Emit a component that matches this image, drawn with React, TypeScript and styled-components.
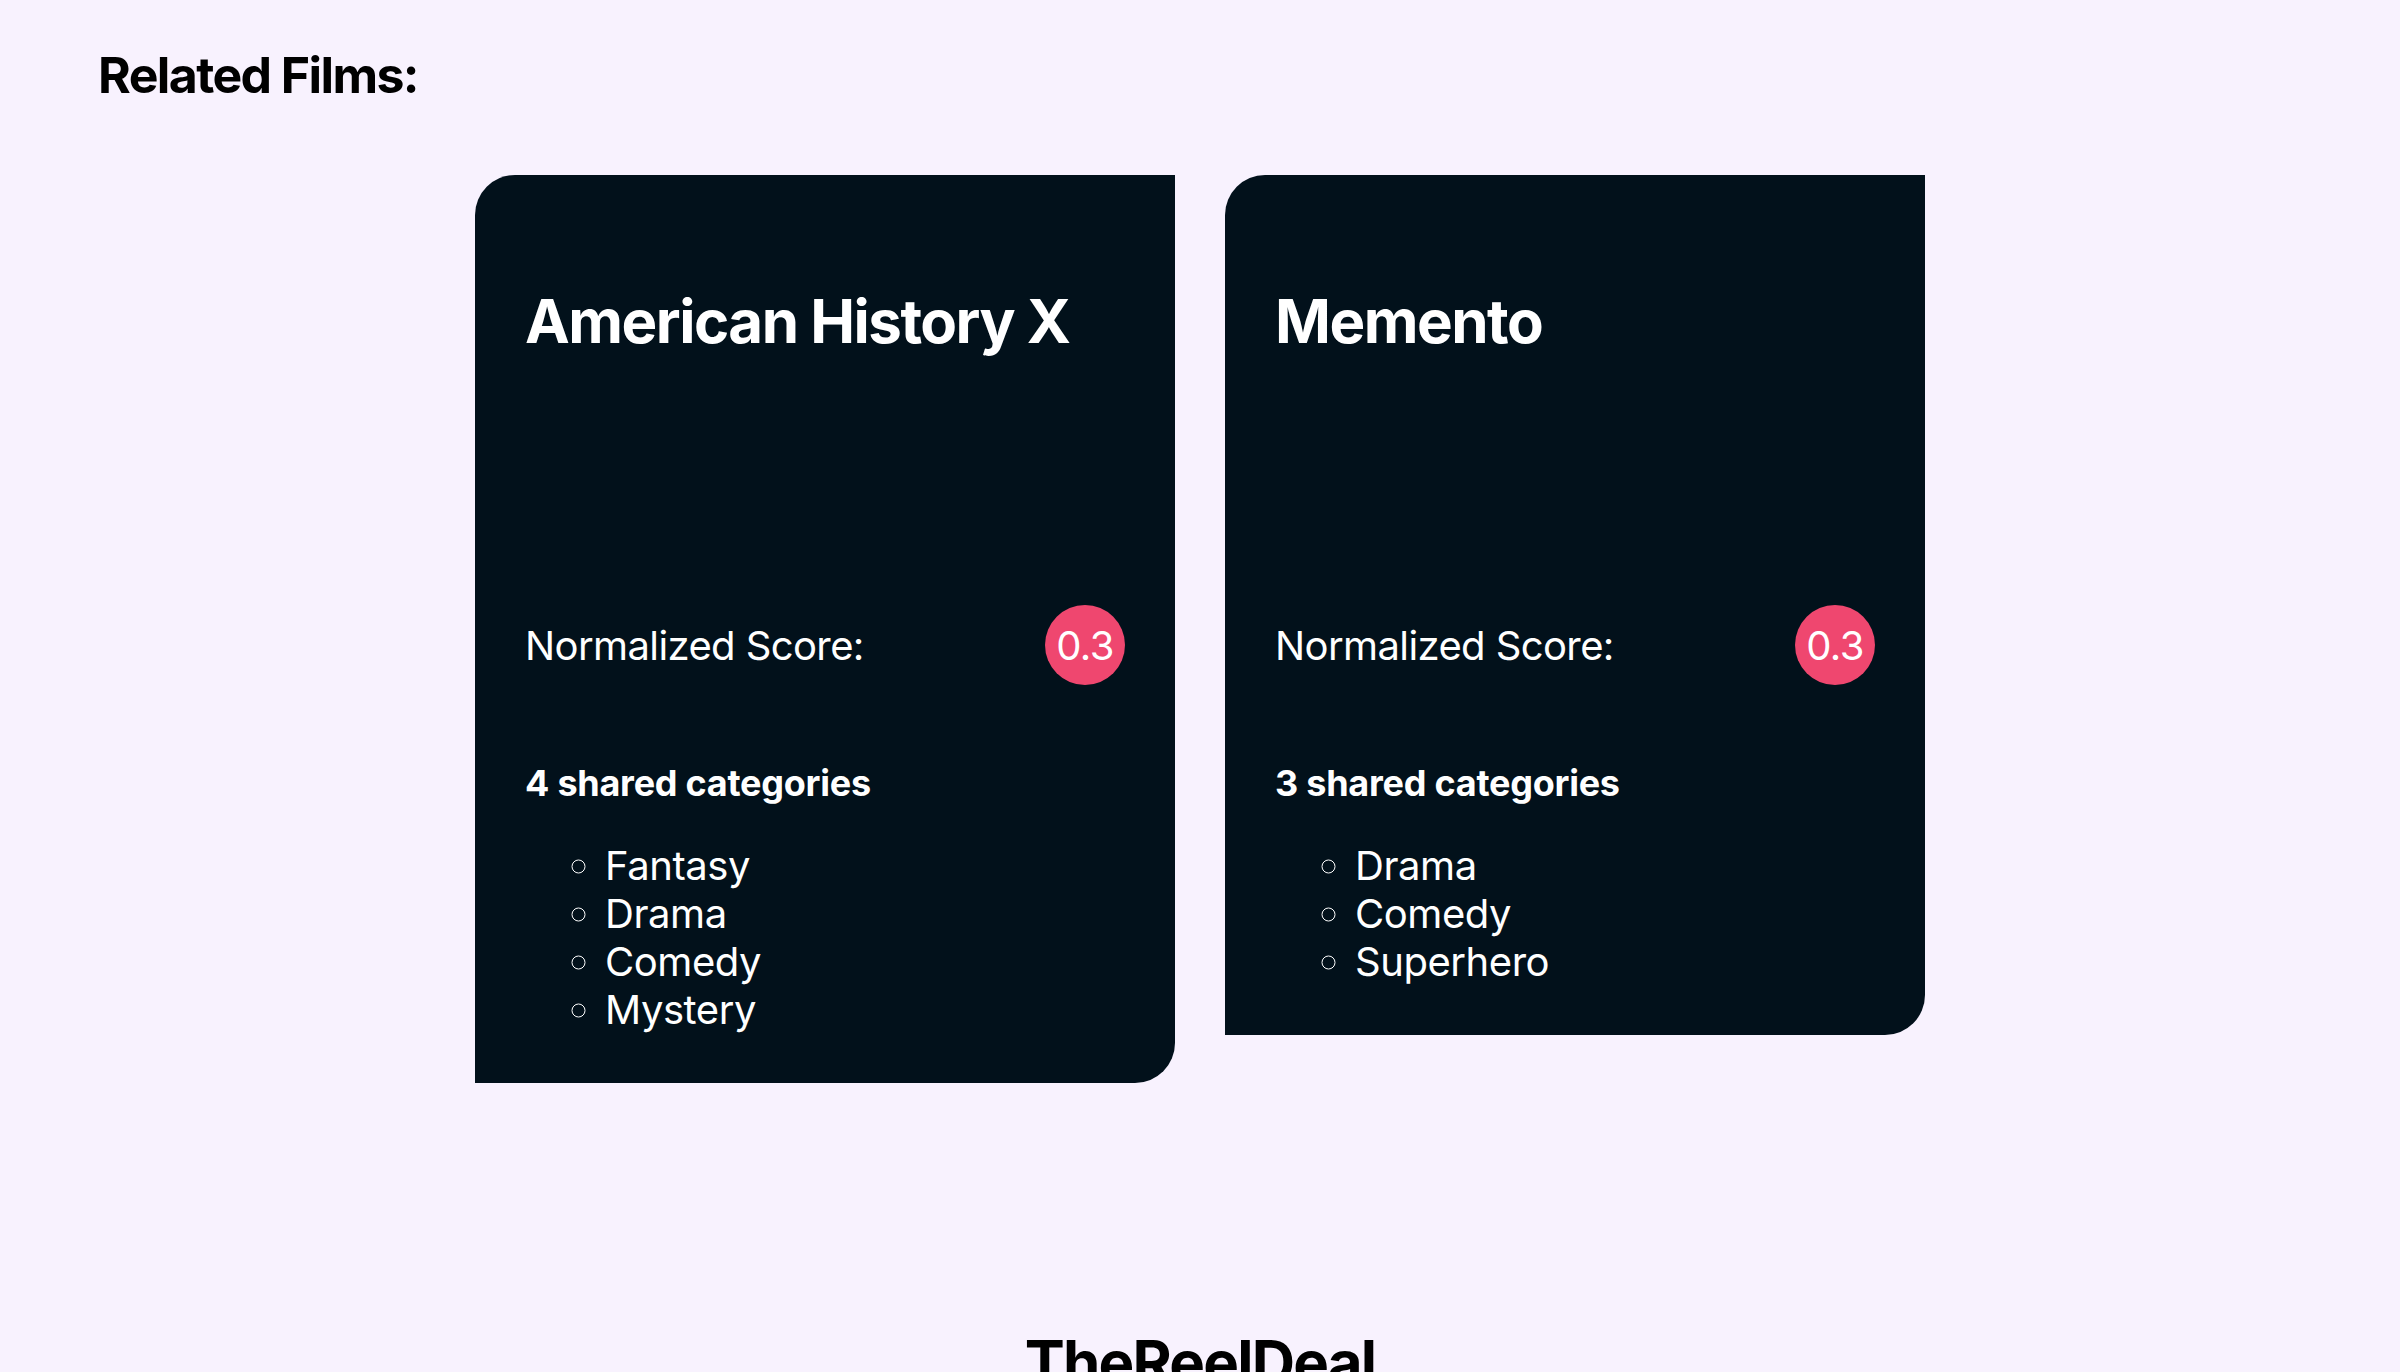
import React from "react";
import styled, { createGlobalStyle } from "styled-components";

const GlobalStyle = createGlobalStyle`
    html, body {
        margin: 0;
        padding: 0;
        background-color: #f8f2fe;
        font-family: Inter, "Noto Sans", sans-serif;
        color: #000;
    }
`;

const Page = styled.div`
    & {
        min-height: 1372px;
        padding-top: 45px;
        box-sizing: border-box;
    }
`;

const Heading = styled.h1`
    & {
        margin: 0 0 0 98px;
        font-size: 50px;
        font-weight: 700;
        line-height: normal;
        letter-spacing: -1.6px;
    }
`;

const CardRow = styled.div`
    & {
        display: flex;
        justify-content: center;
        align-items: flex-start;
        gap: 50px;
        margin-top: 70px;
    }
`;

const Card = styled.article`
    & {
        display: flex;
        flex-direction: column;
        width: 700px;
        padding: 50px 50px 49px;
        box-sizing: border-box;
        background-color: #02111b;
        border-radius: 40px 0 40px 0;
        color: #fff;
    }
`;

const Title = styled.h2`
    & {
        margin: 60px 0 0;
        min-height: 260px;
        font-size: 60px;
        font-weight: 700;
        line-height: normal;
        letter-spacing: -1.5px;
    }
`;

const ScoreRow = styled.div`
    & {
        display: flex;
        justify-content: space-between;
        align-items: center;
        margin-top: 60px;
        font-size: 40px;
        letter-spacing: -0.6px;
    }
`;

const Badge = styled.span`
    & {
        display: flex;
        justify-content: center;
        align-items: center;
        width: 80px;
        height: 80px;
        border-radius: 50%;
        background-color: #ef476f;
        font-size: 40px;
    }
`;

const CategoryHead = styled.h3`
    & {
        margin: 76px 0 0;
        font-size: 36px;
        font-weight: 700;
        line-height: normal;
        letter-spacing: -0.25px;
    }
`;

const CategoryList = styled.ul`
    & {
        margin: 37px 0 0;
        padding-left: 80px;
        list-style: circle;
        font-size: 40px;
        line-height: 48px;
        letter-spacing: -0.45px;
    }
`;

const Footer = styled.footer`
    & {
        margin-top: 243px;
        text-align: center;
        font-size: 60px;
        font-weight: 700;
        line-height: normal;
        letter-spacing: -1.8px;
    }
`;

interface Film {
    title: string;
    score: number;
    categories: string[];
}

const films: Film[] = [
    { title: "American History X", score: 0.3, categories: ["Fantasy", "Drama", "Comedy", "Mystery"] },
    { title: "Memento", score: 0.3, categories: ["Drama", "Comedy", "Superhero"] },
];

const FilmCard = ({ title, score, categories }: Film) => (
    <Card>
        <Title>{title}</Title>
        <ScoreRow>
            <span>Normalized Score:</span>
            <Badge>{score}</Badge>
        </ScoreRow>
        <CategoryHead>{categories.length} shared categories</CategoryHead>
        <CategoryList>
            {categories.map((c) => (
                <li key={c}>{c}</li>
            ))}
        </CategoryList>
    </Card>
);

const App = () => {
    return (
        <Page>
            <GlobalStyle />
            <Heading>Related Films:</Heading>
            <CardRow>
                {films.map((f) => (
                    <FilmCard key={f.title} {...f} />
                ))}
            </CardRow>
            <Footer>TheReelDeal</Footer>
        </Page>
    );
};

export default App;
